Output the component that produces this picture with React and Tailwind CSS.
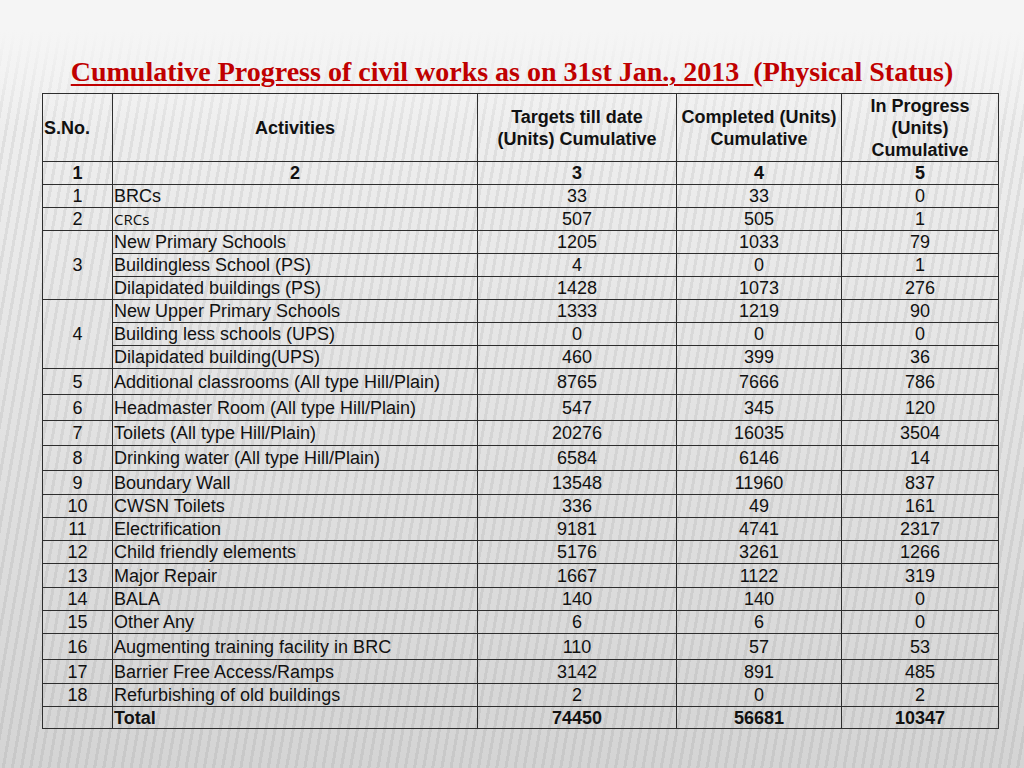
import React from "react";

const rows = [
  { no: "1", act: "BRCs", t: "33", c: "33", p: "0", h: "h-[23px]" },
  { no: "2", act: "CRCs", t: "507", c: "505", p: "1", h: "h-[23px]", calibri: true },
  { no: "3", span: 3, act: "New Primary Schools", t: "1205", c: "1033", p: "79", h: "h-[23px]" },
  { act: "Buildingless School (PS)", t: "4", c: "0", p: "1", h: "h-[23px]" },
  { act: "Dilapidated buildings (PS)", t: "1428", c: "1073", p: "276", h: "h-[23px]" },
  { no: "4", span: 3, act: "New Upper Primary Schools", t: "1333", c: "1219", p: "90", h: "h-[23px]" },
  { act: "Building less schools (UPS)", t: "0", c: "0", p: "0", h: "h-[23px]" },
  { act: "Dilapidated building(UPS)", t: "460", c: "399", p: "36", h: "h-[23px]" },
  { no: "5", act: "Additional classrooms (All type Hill/Plain)", t: "8765", c: "7666", p: "786", h: "h-[26px]" },
  { no: "6", act: "Headmaster Room (All type Hill/Plain)", t: "547", c: "345", p: "120", h: "h-[26px]" },
  { no: "7", act: "Toilets (All type Hill/Plain)", t: "20276", c: "16035", p: "3504", h: "h-[25px]" },
  { no: "8", act: "Drinking water (All type Hill/Plain)", t: "6584", c: "6146", p: "14", h: "h-[25px]" },
  { no: "9", act: "Boundary Wall", t: "13548", c: "11960", p: "837", h: "h-[24px]" },
  { no: "10", act: "CWSN Toilets", t: "336", c: "49", p: "161", h: "h-[23px]" },
  { no: "11", act: "Electrification", t: "9181", c: "4741", p: "2317", h: "h-[23px]" },
  { no: "12", act: "Child friendly elements", t: "5176", c: "3261", p: "1266", h: "h-[23px]" },
  { no: "13", act: "Major Repair", t: "1667", c: "1122", p: "319", h: "h-[24px]" },
  { no: "14", act: "BALA", t: "140", c: "140", p: "0", h: "h-[23px]" },
  { no: "15", act: "Other Any", t: "6", c: "6", p: "0", h: "h-[23px]" },
  { no: "16", act: "Augmenting training facility in BRC", t: "110", c: "57", p: "53", h: "h-[26px]" },
  { no: "17", act: "Barrier Free Access/Ramps", t: "3142", c: "891", p: "485", h: "h-[24px]" },
  { no: "18", act: "Refurbishing of old buildings", t: "2", c: "0", p: "2", h: "h-[23px]" },
];

const cell = "border border-[#2e2e2e] p-0";

export default function App() {
  return (
    <div className="w-[1024px] h-[768px] overflow-hidden bg-[image:linear-gradient(to_bottom,#f5f5f5_30px,rgba(245,245,245,0)_130px),repeating-linear-gradient(100deg,rgba(0,0,0,0.06)_0_3px,rgba(255,255,255,0)_3px_9px),linear-gradient(to_bottom,#f3f3f3,#d4d4d4)]">
      <div className="pt-[56px] flex justify-center">
        <h1 className="font-['Liberation_Serif',serif] font-bold text-[28px] leading-[32px] text-[#c00000] whitespace-pre">
          <span className="underline decoration-2 underline-offset-[3px]">
            {"Cumulative Progress of civil works as on 31st Jan., 2013  "}
          </span>
          (Physical Status)
        </h1>
      </div>
      <table className="ml-[42px] mt-[5px] w-[956px] table-fixed border-collapse font-['Liberation_Sans',Arial,sans-serif] text-[18px] leading-none text-[#111]">
        <colgroup>
          <col className="w-[70px]" />
          <col className="w-[365px]" />
          <col className="w-[199px]" />
          <col className="w-[165px]" />
          <col className="w-[157px]" />
        </colgroup>
        <thead>
          <tr className="h-[68px] font-bold">
            <th className={`${cell} text-left pl-[1px]`}>S.No.</th>
            <th className={`${cell} text-center`}>Activities</th>
            <th className={`${cell} text-center leading-[22px]`}>
              Targets till date
              <br />
              (Units) Cumulative
            </th>
            <th className={`${cell} text-center leading-[22px]`}>
              Completed (Units)
              <br />
              Cumulative
            </th>
            <th className={`${cell} text-center leading-[22px]`}>
              In Progress
              <br />
              (Units)
              <br />
              Cumulative
            </th>
          </tr>
          <tr className="h-[23px] font-bold">
            <th className={`${cell} text-center`}>1</th>
            <th className={`${cell} text-center`}>2</th>
            <th className={`${cell} text-center`}>3</th>
            <th className={`${cell} text-center`}>4</th>
            <th className={`${cell} text-center`}>5</th>
          </tr>
        </thead>
        <tbody>
          {rows.map((r, i) => (
            <tr key={i} className={r.h}>
              {r.no && (
                <td rowSpan={r.span || 1} className={`${cell} text-center`}>
                  {r.no}
                </td>
              )}
              <td
                className={`${cell} pl-[1px] ${
                  r.calibri ? "font-['Open_Sans',sans-serif] text-[15px]" : ""
                }`}
              >
                {r.act}
              </td>
              <td className={`${cell} text-center`}>{r.t}</td>
              <td className={`${cell} text-center`}>{r.c}</td>
              <td className={`${cell} text-center`}>{r.p}</td>
            </tr>
          ))}
          <tr className="h-[22px] font-bold">
            <td className={cell}></td>
            <td className={`${cell} pl-[1px]`}>Total</td>
            <td className={`${cell} text-center`}>74450</td>
            <td className={`${cell} text-center`}>56681</td>
            <td className={`${cell} text-center`}>10347</td>
          </tr>
        </tbody>
      </table>
    </div>
  );
}
